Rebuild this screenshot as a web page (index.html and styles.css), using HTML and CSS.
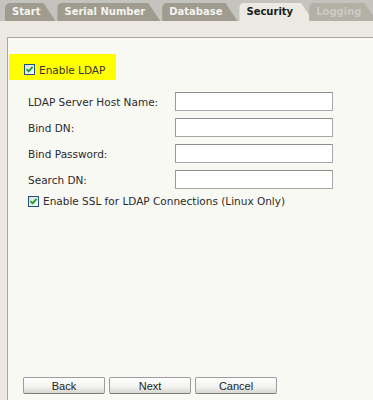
FILE: index.html
```html
<!DOCTYPE html>
<html lang="en">
<head>
  <meta charset="UTF-8">
  <title>Security</title>
  <link rel="stylesheet" href="styles.css">
</head>
<body>
  <div class="tabs">
    <div class="tab">Start</div>
    <div class="tab">Serial Number</div>
    <div class="tab">Database</div>
    <div class="tab active">Security</div>
    <div class="tab disabled">Logging</div>
  </div>
  <div class="band"></div>

  <div class="panel">
    <div class="ldap">
      <span class="check"><svg width="9" height="9" viewBox="0 0 9 9"><path d="M1.5 4.2 L3.6 6.4 L7.6 1.8" fill="none" stroke="#21a121" stroke-width="1.8"/></svg></span>
      <span>Enable LDAP</span>
    </div>

    <div class="fields">
      <label>LDAP Server Host Name:</label>
      <div class="input"></div>
      <label>Bind DN:</label>
      <div class="input"></div>
      <label>Bind Password:</label>
      <div class="input"></div>
      <label>Search DN:</label>
      <div class="input"></div>
    </div>

    <div class="ssl">
      <span class="check"><svg width="9" height="9" viewBox="0 0 9 9"><path d="M1.5 4.2 L3.6 6.4 L7.6 1.8" fill="none" stroke="#21a121" stroke-width="1.8"/></svg></span>
      <span>Enable SSL for LDAP Connections (Linux Only)</span>
    </div>

    <div class="buttons">
      <button>Back</button>
      <button>Next</button>
      <button>Cancel</button>
    </div>
  </div>
</body>
</html>
```

FILE: styles.css
```css
body {
  margin: 0;
  height: 100vh;
  display: flex;
  flex-direction: column;
  font-family: "DejaVu Sans", Verdana, sans-serif;
  font-size: 10.5px;
  color: #2b2b2b;
  background: #ebe9e1;
}

.tabs {
  height: 21px;
  display: flex;
  align-items: flex-end;
  gap: 2px;
  padding-left: 5px;
  background: #c4c3bd;
  overflow: hidden;
}

.tab {
  height: 18px;
  line-height: 18px;
  padding: 0 15px 0 7px;
  font-size: 10px;
  font-weight: bold;
  color: #f4f3ee;
  background: #9f9b8f;
  border-radius: 5px 0 0 0;
  clip-path: polygon(0 0, calc(100% - 12px) 0, 100% 100%, 0 100%);
  white-space: nowrap;
}

.tab.active {
  background: #ebe9e1;
  color: #1c1c1c;
  padding-right: 20px;
}

.tab.disabled {
  background: #b3b0a6;
  color: #cdcbc4;
  margin-left: -6px;
}

.band {
  height: 16px;
}

.panel {
  flex: 1;
  margin-left: 7px;
  border-left: 1px solid #a6a6a2;
  border-top: 1px solid #a6a6a2;
  background: #f9f9f4;
  display: flex;
  flex-direction: column;
}

.check {
  width: 9px;
  height: 9px;
  border: 1px solid #1c5180;
  background: linear-gradient(135deg, #dcdcd6, #ffffff);
  display: inline-flex;
  flex: none;
}

.ldap {
  margin: 16px 0 0 1px;
  width: 107px;
  height: 26px;
  box-sizing: border-box;
  padding: 0 0 4px 15px;
  background: #ffff00;
  display: flex;
  align-items: flex-end;
  gap: 4px;
  color: #333;
}

.ldap .check {
  margin-bottom: 1px;
}

.fields {
  margin: 12px 0 0 20px;
  display: grid;
  grid-template-columns: 147px 158px;
  grid-auto-rows: 19px;
  row-gap: 7px;
  align-items: center;
}

.input {
  height: 19px;
  box-sizing: border-box;
  border: 1px solid #a8a8a8;
  border-top-color: #8e8e8e;
  border-left-color: #9a9a9a;
  background: #fff;
}

.ssl {
  margin: 6px 0 0 20px;
  display: flex;
  align-items: center;
  gap: 4px;
}

.buttons {
  margin-top: auto;
  padding: 0 0 6px 15px;
  display: flex;
  gap: 4px;
}

.buttons button {
  width: 82px;
  height: 17px;
  padding: 0;
  font-family: "Liberation Sans", Arial, sans-serif;
  font-size: 11px;
  color: #222;
  border: 1px solid #9c9c9c;
  border-bottom-color: #7c7c7c;
  border-radius: 2px;
  background: linear-gradient(#ffffff, #f1f1ee 60%, #d6d6d0);
}
```
